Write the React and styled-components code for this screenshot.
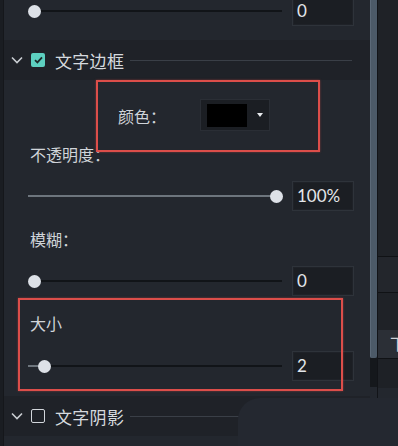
import React from "react"
import styled, { createGlobalStyle } from "styled-components"

const GlobalStyle = createGlobalStyle`
  html, body {
    margin: 0;
    padding: 0;
    background: #23272e;
  }
  body {
    font-family: Lato, "Noto Sans CJK SC", sans-serif;
    color: #d3d7dc;
  }
`

const Page = styled.div`
  position: relative;
  display: flex;
  width: 398px;
  height: 446px;
  overflow: hidden;
  background: #23272e;
`

const LeftStrip = styled.div`
  flex: 0 0 3px;
  background: #1a1d22;
  border-right: 1px solid #15171b;
`

const Panel = styled.div`
  flex: 0 0 366px;
  display: flex;
  flex-direction: column;
`

const ScrollCol = styled.div`
  flex: 0 0 7px;
  display: flex;
  flex-direction: column;
`

const ScrollThumb = styled.div`
  height: 358px;
  background: #4c5a68;
  border-left: 1px solid #5b6978;
  border-radius: 0 0 2px 2px;
`

const ScrollTrack = styled.div`
  height: 29px;
  background: #15181c;
`

const RightPane = styled.div`
  flex: 1;
  display: flex;
  flex-direction: column;
  border-left: 1px solid #121418;
  overflow: hidden;
`

const PaneBlock = styled.div`
  height: ${({ $h }) => $h}px;
  background: ${({ $bg }) => $bg};
  border-bottom: ${({ $line }) => ($line ? "1px solid #101215" : "none")};
  color: #cfd3d8;
  font-size: 16px;
  line-height: ${({ $h }) => $h}px;
  padding-left: 12px;
  white-space: nowrap;
`

const SliderRow = styled.div`
  display: flex;
  align-items: center;
  height: 30px;
  padding-left: 24px;
  margin-top: ${({ $mt }) => $mt || 0}px;
`

const Track = styled.div`
  position: relative;
  width: 254px;
  height: 13px;
  &::before {
    content: "";
    position: absolute;
    left: 0;
    right: 0;
    top: 5px;
    height: 2px;
    background: #111418;
  }
`

const Fill = styled.div`
  position: absolute;
  left: 0;
  top: 5px;
  height: 2px;
  background: #6d757d;
`

const Thumb = styled.div`
  position: absolute;
  top: 0;
  width: 13px;
  height: 13px;
  margin-left: -6px;
  border-radius: 50%;
  background: #dde1e7;
`

const NumBox = styled.div`
  box-sizing: border-box;
  width: 62px;
  height: 30px;
  margin-left: 10px;
  padding-left: 4px;
  background: #1b1e23;
  border: 1px solid #2e333a;
  box-shadow: inset 0 0 0 1px #1f2228;
  color: #e3e6ea;
  font-size: 17px;
  line-height: 28px;
`

const Header = styled.div`
  display: flex;
  align-items: center;
  height: 40px;
  margin-top: ${({ $mt }) => $mt}px;
  background: #1f2228;
`

const Chevron = styled.svg`
  margin-left: 7px;
  flex: 0 0 12px;
`

const Check = styled.div`
  box-sizing: border-box;
  flex: 0 0 14px;
  height: 14px;
  margin-left: 8px;
  border-radius: 2px;
  display: flex;
  align-items: center;
  justify-content: center;
  background: ${({ $on }) => ($on ? "#5dd0c0" : "transparent")};
  border: ${({ $on }) => ($on ? "none" : "1.5px solid #d2d6db")};
`

const HeaderText = styled.span`
  margin-left: 10px;
  font-size: 17px;
  color: #d6dade;
  letter-spacing: 0.3px;
`

const HeaderLine = styled.div`
  flex: 1;
  height: 1px;
  margin: 0 18px 0 6px;
  background: #3a3f47;
`

const Label = styled.div`
  padding-left: 26px;
  height: 20px;
  line-height: 20px;
  font-size: 16px;
  color: #d0d4d9;
  margin-top: ${({ $mt }) => $mt}px;
`

const Framed = styled.div`
  position: relative;
  margin-top: ${({ $mt }) => $mt || 0}px;
  padding-bottom: ${({ $pb }) => $pb || 0}px;
  &::after {
    content: "";
    position: absolute;
    box-sizing: border-box;
    top: 0;
    left: ${({ $left }) => $left}px;
    width: ${({ $w }) => $w}px;
    height: ${({ $h }) => $h}px;
    border: 2px solid #dc4e4a;
    box-shadow: 0 0 2px rgba(220, 78, 74, 0.5);
    pointer-events: none;
  }
`

const ColorRow = styled.div`
  display: flex;
  align-items: center;
  height: 72px;
  padding-left: 114px;
`

const ColorLabel = styled.span`
  width: 82px;
  font-size: 16px;
  color: #d0d4d9;
`

const Dropdown = styled.div`
  box-sizing: border-box;
  display: flex;
  align-items: center;
  width: 70px;
  height: 32px;
  padding-left: 6px;
  margin-top: -2px;
  background: #1b1e23;
  border: 1px solid #2a2e35;
`

const Swatch = styled.div`
  width: 40px;
  height: 23px;
  background: #000;
`

const Caret = styled.div`
  margin-left: 10px;
  width: 0;
  height: 0;
  border-left: 3.5px solid transparent;
  border-right: 3.5px solid transparent;
  border-top: 4px solid #e8eaed;
`

const Smudge = styled.div`
  position: absolute;
  left: 238px;
  top: 398px;
  width: 160px;
  height: 48px;
  background: #242830;
  border-top-left-radius: 22px;
`

function Slider({ value, fill }) {
  const x = 6 + value * 242
  return (
    <Track>
      {fill && <Fill style={{ width: x }} />}
      <Thumb style={{ left: x }} />
    </Track>
  )
}

function SliderField({ value, fill, text, mt }) {
  return (
    <SliderRow $mt={mt}>
      <Slider value={value} fill={fill} />
      <NumBox>{text}</NumBox>
    </SliderRow>
  )
}

function SectionHeader({ title, checked, mt }) {
  return (
    <Header $mt={mt}>
      <Chevron width="12" height="8" viewBox="0 0 12 8">
        <path d="M1 1.5 L6 6.5 L11 1.5" fill="none" stroke="#c9cdd2" strokeWidth="1.6" />
      </Chevron>
      <Check $on={checked}>
        {checked && (
          <svg width="9" height="8" viewBox="0 0 9 8">
            <path d="M1 4.2 L3.4 6.4 L8 1.4" fill="none" stroke="#1c2b2b" strokeWidth="1.8" />
          </svg>
        )}
      </Check>
      <HeaderText>{title}</HeaderText>
      <HeaderLine />
    </Header>
  )
}

export default function App() {
  return (
    <>
      <GlobalStyle />
      <Page>
        <LeftStrip />
        <Panel>
          <SliderField value={0} text="0" mt={-4} />
          <SectionHeader title="文字边框" checked mt={14} />
          <Framed $left={92} $w={224} $h={72}>
            <ColorRow>
              <ColorLabel>颜色：</ColorLabel>
              <Dropdown>
                <Swatch />
                <Caret />
              </Dropdown>
            </ColorRow>
          </Framed>
          <Label $mt={-7}>不透明度：</Label>
          <SliderField value={1} fill text="100%" mt={16} />
          <Label $mt={19}>模糊：</Label>
          <SliderField value={0} text="0" mt={16} />
          <Framed $mt={2} $pb={10} $left={14} $w={325} $h={93}>
            <Label $mt={16}>大小</Label>
            <SliderField value={0.04} fill text="2" mt={17} />
          </Framed>
          <SectionHeader title="文字阴影" mt={5} />
        </Panel>
        <ScrollCol>
          <ScrollThumb />
          <ScrollTrack />
        </ScrollCol>
        <RightPane>
          <PaneBlock $h={256} $bg="#1f2227" $line />
          <PaneBlock $h={35} $bg="#23262c" $line />
          <PaneBlock $h={37} $bg="#1f2227" />
          <PaneBlock $h={28} $bg="#2b2f36" $line>下</PaneBlock>
          <PaneBlock $h={29} $bg="#1e2126" />
        </RightPane>
        <Smudge />
      </Page>
    </>
  )
}
